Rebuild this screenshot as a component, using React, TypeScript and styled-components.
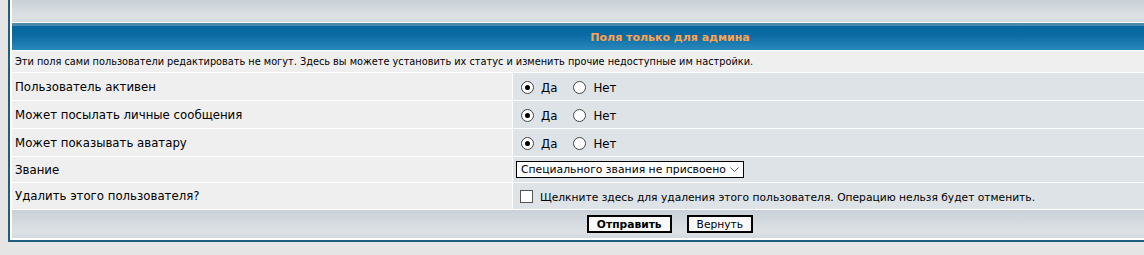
import * as React from 'react';
import styled, { createGlobalStyle } from 'styled-components';

const GlobalStyle = createGlobalStyle`
html, body {
    margin: 0;
    padding: 0;
    background: #e5e5e5;
    overflow: hidden;
    font-family: "DejaVu Sans", Verdana, sans-serif;
    color: #000;
}
`;

const Page = styled.div`
padding-left: 8px;
`;

const Table = styled.div`
width: 1324px;
box-sizing: border-box;
border: 2px solid #1e5f80;
border-top: none;
padding: 0 2px 2px 2px;
background: #fff;
display: grid;
grid-template-columns: 500px 815px;
gap: 1px;
`;

const CatCell = styled.div<{ $h: number }>`
grid-column: 1 / -1;
height: ${p => p.$h}px;
background: linear-gradient(to bottom, #c9d1d8 0%, #dee2e5 80%, #d3d9de 100%);
display: flex;
align-items: center;
justify-content: center;
gap: 15px;
`;

const HeadCell = styled.div`
grid-column: 1 / -1;
height: 27px;
background: linear-gradient(to bottom, #4d89aa 0, #4d89aa 3px, #07669e 3px, #0a6aa2 12px, #2a88bb 100%);
color: #ffa34f;
font-weight: bold;
font-size: 11px;
display: flex;
align-items: center;
justify-content: center;
padding-top: 2px;
box-sizing: border-box;
`;

const DescCell = styled.div`
grid-column: 1 / -1;
height: 21px;
background: #efefef;
font-size: 9.75px;
display: flex;
align-items: center;
padding-left: 3px;
`;

const LabelCell = styled.div<{ $h: number }>`
height: ${p => p.$h}px;
background: #efefef;
font-size: 11.75px;
display: flex;
align-items: center;
padding-left: 3px;
`;

const ValueCell = styled.div<{ $h: number; $pl?: number }>`
height: ${p => p.$h}px;
background: #dee3e7;
display: flex;
align-items: center;
padding-left: ${p => p.$pl ?? 8}px;
font-size: 11.75px;
`;

const Radio = styled.input.attrs({ type: 'radio' })`
appearance: none;
margin: 0;
width: 13px;
height: 13px;
border: 1px solid #444;
border-radius: 50%;
background: #fff;
box-sizing: border-box;
display: grid;
place-content: center;
&:checked::before {
    content: '';
    width: 5px;
    height: 5px;
    border-radius: 50%;
    background: #000;
}
`;

const Option = styled.label<{ $gap?: number }>`
display: flex;
align-items: center;
gap: 7px;
margin-right: ${p => p.$gap ?? 0}px;
padding-top: 2px;
`;

const Checkbox = styled.input.attrs({ type: 'checkbox' })`
appearance: none;
margin: 0 7px 0 0;
width: 13px;
height: 13px;
border: 1px solid #555;
background: #fff;
box-sizing: border-box;
`;

const CheckText = styled.span`
font-size: 10.7px;
padding-top: 2px;
`;

const SelectWrap = styled.div`
position: relative;
width: 228px;
height: 17px;
`;

const Select = styled.select`
appearance: none;
width: 100%;
height: 100%;
border: 1px solid #000;
border-radius: 0;
background: #fff;
font-family: inherit;
font-size: 10.8px;
padding: 0 12px 0 4px;
margin: 0;
color: #000;
`;

const Chevron = styled.svg`
position: absolute;
right: 5px;
top: 6px;
pointer-events: none;
`;

const Button = styled.button<{ $bold?: boolean }>`
height: 18px;
box-sizing: border-box;
border: 2px solid #000;
background: #fafafa;
font-family: inherit;
font-size: 10.7px;
font-weight: ${p => (p.$bold ? 'bold' : 'normal')};
padding: 0 8px;
color: #000;
`;

const YesNo = ({ name }: { name: string }) => (
    <>
        <Option $gap={16}><Radio name={name} defaultChecked />Да</Option>
        <Option><Radio name={name} />Нет</Option>
    </>
);

export default function App() {
    return (
        <Page>
            <GlobalStyle />
            <Table>
                <CatCell $h={22} />
                <HeadCell>Поля только для админа</HeadCell>
                <DescCell>Эти поля сами пользователи редактировать не могут. Здесь вы можете установить их статус и изменить прочие недоступные им настройки.</DescCell>

                <LabelCell $h={27}>Пользователь активен</LabelCell>
                <ValueCell $h={27}><YesNo name="active" /></ValueCell>

                <LabelCell $h={27}>Может посылать личные сообщения</LabelCell>
                <ValueCell $h={27}><YesNo name="pm" /></ValueCell>

                <LabelCell $h={27}>Может показывать аватару</LabelCell>
                <ValueCell $h={27}><YesNo name="avatar" /></ValueCell>

                <LabelCell $h={25}>Звание</LabelCell>
                <ValueCell $h={25} $pl={3}>
                    <SelectWrap>
                        <Select defaultValue="0">
                            <option value="0">Специального звания не присвоено</option>
                        </Select>
                        <Chevron width="9" height="5" viewBox="0 0 9 5">
                            <path d="M0.5 0.5 L4.5 4.5 L8.5 0.5" fill="none" stroke="#555" strokeWidth="1" />
                        </Chevron>
                    </SelectWrap>
                </ValueCell>

                <LabelCell $h={26}>Удалить этого пользователя?</LabelCell>
                <ValueCell $h={26} $pl={7}>
                    <Checkbox />
                    <CheckText>Щелкните здесь для удаления этого пользователя. Операцию нельзя будет отменить.</CheckText>
                </ValueCell>

                <CatCell $h={28}>
                    <Button $bold>Отправить</Button>
                    <Button>Вернуть</Button>
                </CatCell>
            </Table>
        </Page>
    );
}
